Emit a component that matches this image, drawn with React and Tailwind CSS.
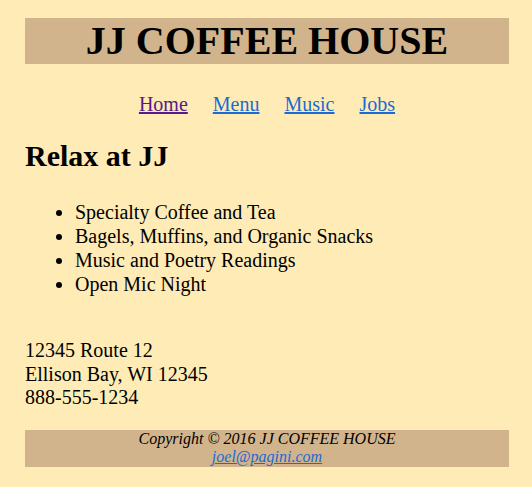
export default function App() {
  return (
    <div className="min-h-[487px] bg-[#ffebb5] pl-[25px] pr-[23px] pt-[18px] pb-[20px] text-black" style={{ fontFamily: '"Liberation Serif", "Times New Roman", serif' }}>
      <header className="bg-[#d2b48c]">
        <h1 className="text-center text-[40px] font-bold leading-[46px]">JJ COFFEE HOUSE</h1>
      </header>
      <nav className="mt-[29px] flex justify-center gap-[25px] text-[20px] leading-[23px]">
        <a href="#" className="text-[#551a8b] underline">Home</a>
        <a href="#" className="text-[#1a6bd4] underline">Menu</a>
        <a href="#" className="text-[#1a6bd4] underline">Music</a>
        <a href="#" className="text-[#1a6bd4] underline">Jobs</a>
      </nav>
      <main>
        <h2 className="mt-[22px] text-[30px] font-bold leading-[35px]">Relax at JJ</h2>
        <ul className="mt-[27px] list-disc pl-[50px] text-[20px] leading-[24px]">
          <li>Specialty Coffee and Tea</li>
          <li>Bagels, Muffins, and Organic Snacks</li>
          <li>Music and Poetry Readings</li>
          <li>Open Mic Night</li>
        </ul>
        <div className="mt-[43px] text-[20px] leading-[23.5px]">
          <div>12345 Route 12</div>
          <div>Ellison Bay, WI 12345</div>
          <div>888-555-1234</div>
        </div>
      </main>
      <footer className="mt-[20px] bg-[#d2b48c] text-center text-[16px] italic leading-[18.5px]">
        <div>Copyright © 2016 JJ COFFEE HOUSE</div>
        <a href="#" className="text-[#1a6bd4] underline">joel@pagini.com</a>
      </footer>
    </div>
  );
}
